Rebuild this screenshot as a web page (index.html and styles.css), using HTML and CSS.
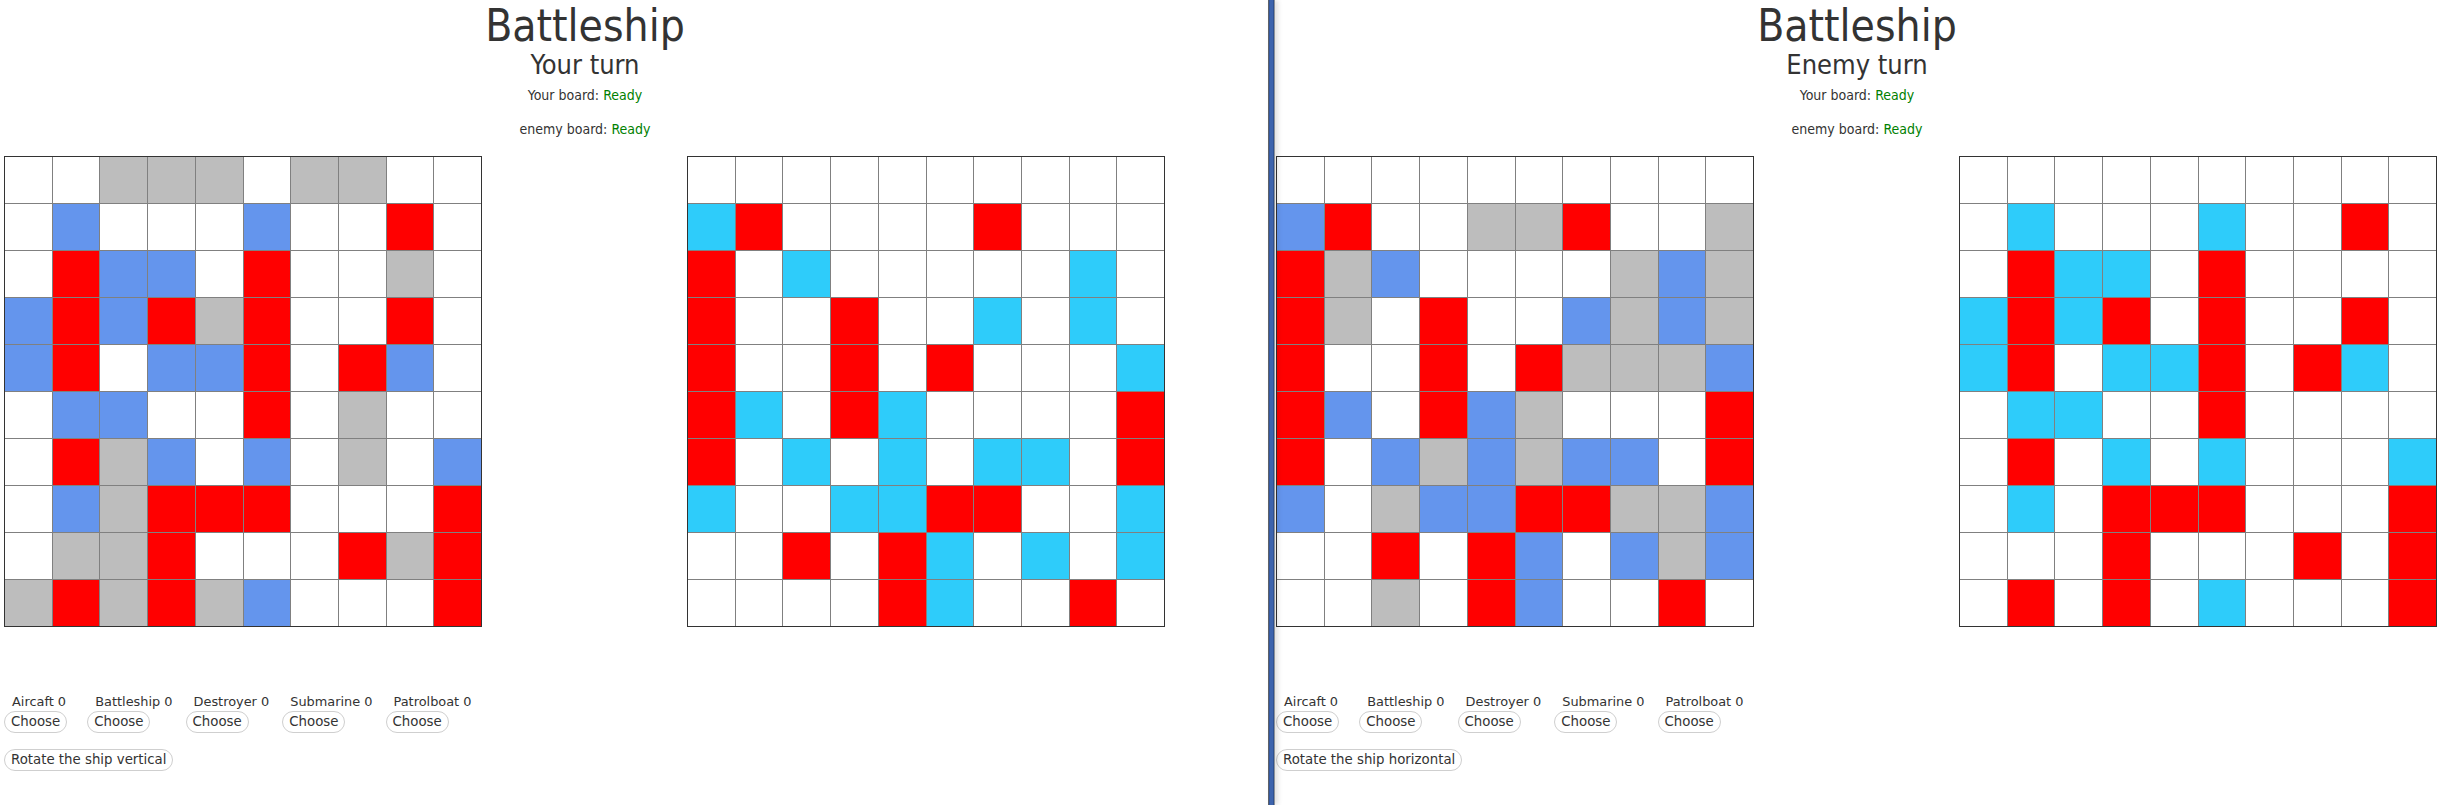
FILE: index.html
```html
<!DOCTYPE html>
<html lang="en">
<head>
<meta charset="utf-8">
<title>Battleship</title>
<link rel="stylesheet" href="styles.css">
</head>
<body>
<div class="app">
  <section class="panel">
    <header class="head">
      <h1 class="title">Battleship</h1>
      <h2 class="turn">Your turn</h2>
      <p class="status">Your board: <span class="ready">Ready</span></p>
      <p class="status status-enemy">enemy board: <span class="ready">Ready</span></p>
    </header>
    <div class="boards">
      <div class="board" data-board="WWGGGWGGWW WBWWWBWWRW WRBBWRWWGW BRBRGRWWRW BRWBBRWRBW WBBWWRWGWW WRGBWBWGWB WBGRRRWWWR WGGRWWWRGR GRGRGBWWWR"></div>
      <div class="board" data-board="WWWWWWWWWW CRWWWWRWWW RWCWWWWWCW RWWRWWCWCW RWWRWRWWWC RCWRCWWWWR RWCWCWCCWR CWWCCRRWWC WWRWRCWCWC WWWWRCWWRW"></div>
    </div>
    <div class="controls">
      <div class="ships">
        <div class="ship ship-first"><span class="ship-label">Aircaft 0</span><button class="btn">Choose</button></div>
        <div class="ship"><span class="ship-label">Battleship 0</span><button class="btn">Choose</button></div>
        <div class="ship"><span class="ship-label">Destroyer 0</span><button class="btn">Choose</button></div>
        <div class="ship"><span class="ship-label">Submarine 0</span><button class="btn">Choose</button></div>
        <div class="ship"><span class="ship-label">Patrolboat 0</span><button class="btn">Choose</button></div>
      </div>
      <button class="btn btn-rotate">Rotate the ship vertical</button>
    </div>
  </section>
  <section class="panel">
    <header class="head">
      <h1 class="title">Battleship</h1>
      <h2 class="turn">Enemy turn</h2>
      <p class="status">Your board: <span class="ready">Ready</span></p>
      <p class="status status-enemy">enemy board: <span class="ready">Ready</span></p>
    </header>
    <div class="boards">
      <div class="board" data-board="WWWWWWWWWW BRWWGGRWWG RGBWWWWGBG RGWRWWBGBG RWWRWRGGGB RBWRBGWWWR RWBGBGBBWR BWGBBRRGGB WWRWRBWBGB WWGWRBWWRW"></div>
      <div class="board" data-board="WWWWWWWWWW WCWWWCWWRW WRCCWRWWWW CRCRWRWWRW CRWCCRWRCW WCCWWRWWWW WRWCWCWWWC WCWRRRWWWR WWWRWWWRWR WRWRWCWWWR"></div>
    </div>
    <div class="controls">
      <div class="ships">
        <div class="ship ship-first"><span class="ship-label">Aircaft 0</span><button class="btn">Choose</button></div>
        <div class="ship"><span class="ship-label">Battleship 0</span><button class="btn">Choose</button></div>
        <div class="ship"><span class="ship-label">Destroyer 0</span><button class="btn">Choose</button></div>
        <div class="ship"><span class="ship-label">Submarine 0</span><button class="btn">Choose</button></div>
        <div class="ship"><span class="ship-label">Patrolboat 0</span><button class="btn">Choose</button></div>
      </div>
      <button class="btn btn-rotate">Rotate the ship horizontal</button>
    </div>
  </section>
  <div class="divider"></div>
</div>
<script src="app.js"></script>
</body>
</html>
```

FILE: styles.css
```css
html, body {
  margin: 0;
  padding: 0;
  background: #fff;
}

body {
  color: #333;
  font-family: "DejaVu Sans", sans-serif;
  font-size: 13px;
}

.app {
  position: relative;
  display: flex;
  height: 805px;
  overflow: hidden;
}

.panel {
  width: 1272px;
  flex: none;
}

.panel + .panel {
  flex: 1 1 auto;
  width: auto;
}

.divider {
  position: absolute;
  left: 1268px;
  top: 0;
  bottom: 0;
  width: 7px;
  background: linear-gradient(to right, #5d6168 0 1px, #34589e 1px 2px, #3d64ad 2px 5px, #2f5190 5px 6px, #8f949b 6px 7px);
  box-shadow: 3px 0 5px rgba(0, 0, 0, 0.12);
}

.head {
  width: 1170px;
  padding-top: 2px;
  text-align: center;
  font-family: "DejaVu Sans Condensed", "DejaVu Sans", sans-serif;
  font-stretch: condensed;
  color: #333;
}

.title {
  margin: 0;
  font-size: 44px;
  line-height: 48px;
  font-weight: normal;
}

.turn {
  margin: 1px 0 0;
  font-size: 27px;
  line-height: 28px;
  font-weight: normal;
}

.status {
  margin: 6px 0 0;
  font-size: 14px;
  line-height: 20px;
}

.status-enemy {
  margin-top: 14px;
}

.ready {
  color: #008000;
}

.boards {
  display: flex;
  gap: 205px;
  padding-left: 4px;
  margin-top: 17px;
}

.board {
  width: 478px;
  height: 471px;
  box-sizing: border-box;
  border: 1px solid #333;
  background: #808080;
  display: grid;
  grid-template-columns: repeat(10, 1fr);
  grid-template-rows: repeat(10, 1fr);
  gap: 1px;
}

.cell {
  background: #fff;
}

.cell-g { background: #bdbdbd; }
.cell-b { background: #6495ed; }
.cell-r { background: #ff0000; }
.cell-c { background: #2eccfa; }

.controls {
  padding-left: 4px;
  margin-top: 65px;
}

.ships {
  display: flex;
  gap: 13px;
  align-items: flex-start;
}

.ship {
  display: flex;
  flex-direction: column;
  align-items: flex-start;
}

.ship-first {
  margin-right: 7px;
}

.ship-label {
  padding-left: 8px;
  font-size: 12.9px;
  line-height: 19px;
  color: #333;
}

.btn {
  font-family: "DejaVu Sans", sans-serif;
  font-size: 13.33px;
  line-height: 14px;
  padding: 3px 6px;
  margin: 0;
  border: 1px solid #cfcfcf;
  border-radius: 11px;
  background: #fff;
  color: #333;
}

.btn-rotate {
  margin-top: 16px;
}
```

FILE: app.js
```js
document.querySelectorAll('.board').forEach(function (board) {
  var data = board.getAttribute('data-board').replace(/[^A-Z]/g, '');
  for (var i = 0; i < data.length; i++) {
    var cell = document.createElement('span');
    cell.className = 'cell cell-' + data.charAt(i).toLowerCase();
    board.appendChild(cell);
  }
});
```
